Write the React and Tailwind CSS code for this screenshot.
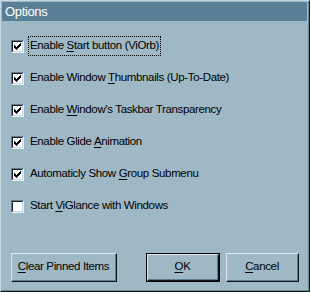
import React from 'react'

const CheckMark = () => (
  <svg width="7" height="7" viewBox="0 0 7 7" shapeRendering="crispEdges" className="block">
    <rect x="6" y="0" width="1" height="1" fill="#000" />
    <rect x="5" y="1" width="2" height="1" fill="#000" />
    <rect x="0" y="2" width="1" height="1" fill="#000" />
    <rect x="4" y="2" width="3" height="1" fill="#000" />
    <rect x="0" y="3" width="2" height="1" fill="#000" />
    <rect x="3" y="3" width="3" height="1" fill="#000" />
    <rect x="0" y="4" width="5" height="1" fill="#000" />
    <rect x="1" y="5" width="3" height="1" fill="#000" />
    <rect x="2" y="6" width="1" height="1" fill="#000" />
  </svg>
)

const Checkbox = ({ checked }) => (
  <div className="w-[13px] h-[13px] shrink-0 border-t border-l border-[#5f7b8c] border-r border-b border-r-[#e8f0f4] border-b-[#e8f0f4]">
    <div className="w-full h-full border-t border-l border-[#1a2228] border-r border-b border-r-[#c4d6e0] border-b-[#c4d6e0] bg-white flex items-center justify-center">
      {checked && <CheckMark />}
    </div>
  </div>
)

const Label = ({ before, hot, after }) => (
  <span className="whitespace-nowrap">
    {before}
    <span className="underline underline-offset-[2px]">{hot}</span>
    {after}
  </span>
)

const options = [
  { checked: true, before: 'Enable ', hot: 'S', after: 'tart button (ViOrb)', focus: true },
  { checked: true, before: 'Enable Window ', hot: 'T', after: 'humbnails (Up-To-Date)' },
  { checked: true, before: 'Enable ', hot: 'W', after: "indow's Taskbar Transparency" },
  { checked: true, before: 'Enable Glide ', hot: 'A', after: 'nimation' },
  { checked: true, before: 'Automaticly Show ', hot: 'G', after: 'roup Submenu' },
  { checked: false, before: 'Start ', hot: 'V', after: 'iGlance with Windows' },
]

const Button = ({ children, isDefault, width }) => (
  <div className={`${width} h-[29px] ${isDefault ? 'border border-black' : ''}`}>
    <div className="w-full h-full border-t border-l border-[#dde9ef] border-r border-b border-r-[#0c1418] border-b-[#0c1418]">
      <div className="w-full h-full border-r border-b border-[#5f7b8c] flex items-center justify-center text-black">
        {children}
      </div>
    </div>
  </div>
)

export default function App() {
  return (
    <div
      className="w-[310px] h-[292px] bg-[#9fb8c6] border-t border-l border-[#c6d8e2] border-r border-b border-r-[#0f1a20] border-b-[#0f1a20] text-[11.5px] tracking-[-0.35px] leading-none text-black"
      style={{ fontFamily: '"Liberation Sans", Arial, sans-serif' }}
    >
      <div className="w-full h-full flex flex-col border-r border-b border-[#6b8696] p-px">
        {/* Title bar */}
        <div className="h-[19px] bg-[#587f97] flex items-center pl-[3px] text-white text-[13px]">
          Options
        </div>

        {/* Options */}
        <div className="flex flex-col pt-[9px] pl-[9px]">
          {options.map((o, i) => (
            <div key={i} className="h-[32px] flex items-center gap-[4px]">
              <Checkbox checked={o.checked} />
              <div className={`px-[1px] py-[3px] border border-dotted ${o.focus ? 'border-black' : 'border-transparent'}`}>
                <Label before={o.before} hot={o.hot} after={o.after} />
              </div>
            </div>
          ))}
        </div>

        {/* Buttons */}
        <div className="mt-auto mb-[7px] flex items-center pl-[9px] pr-[8px]">
          <Button width="w-[106px]">
            <Label hot="C" after="lear Pinned Items" />
          </Button>
          <div className="ml-auto flex gap-[6px]">
            <Button isDefault width="w-[74px]">
              <Label hot="O" after="K" />
            </Button>
            <Button width="w-[73px]">
              <Label hot="C" after="ancel" />
            </Button>
          </div>
        </div>
      </div>
    </div>
  )
}
